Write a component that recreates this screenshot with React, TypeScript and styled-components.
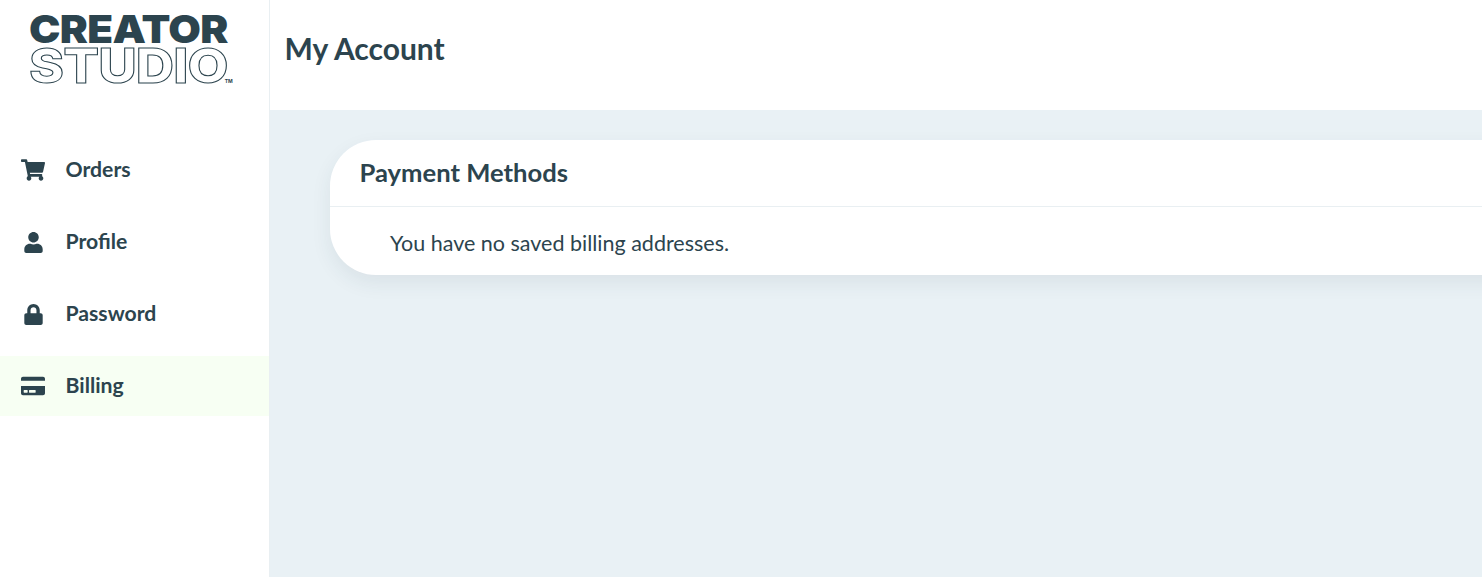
import styled, { createGlobalStyle } from 'styled-components';
import { FaShoppingCart, FaUser, FaLock, FaCreditCard } from 'react-icons/fa';
import type { IconType } from 'react-icons';

const GlobalStyle = createGlobalStyle`
  html, body {
    margin: 0;
    padding: 0;
    height: 100%;
    overflow: hidden;
    background: #fff;
  }
  body {
    font-family: 'Lato', 'Liberation Sans', sans-serif;
    color: #2c444e;
  }
  * {
    box-sizing: border-box;
  }
`;

const Shell = styled.div`
  display: flex;
  width: 100vw;
  height: 100vh;
  overflow: hidden;
`;

const Sidebar = styled.aside`
  flex: 0 0 270px;
  border-right: 1px solid #e9eff2;
  background: #fff;
`;

const LogoBox = styled.div`
  height: 140px;
  padding: 13px 0 0 29px;
`;

const LogoTop = styled.div`
  font-family: 'Inter', sans-serif;
  font-weight: 900;
  font-size: 39px;
  line-height: 32px;
  letter-spacing: -0.6px;
  color: #2c444e;
  transform: scaleX(1.08);
  transform-origin: left center;
`;

const LogoBottomRow = styled.div`
  display: flex;
  align-items: flex-end;
  margin-top: 3px;
`;

const LogoBottom = styled.div`
  font-family: 'Inter', sans-serif;
  font-weight: 800;
  font-size: 48px;
  line-height: 36px;
  letter-spacing: -0.8px;
  color: #fff;
  -webkit-text-stroke: 1px #2c444e;
  transform: scaleX(1.105);
  transform-origin: left center;
`;

const LogoTm = styled.span`
  margin: 0 0 0 16px;
  font-family: 'Inter', sans-serif;
  font-weight: 700;
  font-size: 5px;
  line-height: 6px;
`;

const NavList = styled.nav`
  display: flex;
  flex-direction: column;
  gap: 12px;
`;

const NavItem = styled.a<{ $active?: boolean }>`
  display: flex;
  align-items: center;
  height: 60px;
  padding: 0 0 2px 21px;
  font-size: 21.2px;
  font-weight: 700;
  color: #2c444e;
  background: ${(props) => (props.$active ? '#f7fff3' : 'transparent')};
`;

const NavIcon = styled.span<{ $size: number }>`
  display: flex;
  justify-content: center;
  width: 24px;
  margin: 2px 20.5px 0 0;
  font-size: ${(props) => props.$size}px;
`;

const Main = styled.main`
  flex: 1;
  min-width: 0;
  display: flex;
  flex-direction: column;
  background: #e9f1f5;
`;

const TopBar = styled.header`
  display: flex;
  align-items: center;
  height: 110px;
  padding: 0 0 14px 14.5px;
  background: #fff;
`;

const PageTitle = styled.h1`
  margin: 0;
  font-size: 30px;
  font-weight: 700;
  color: #2c444e;
`;

const Content = styled.div`
  padding: 30px 0 0 60px;
`;

const Card = styled.section`
  width: 1400px;
  border-radius: 46px;
  background: #fff;
  box-shadow: 0 8px 20px rgba(44, 68, 78, 0.08);
`;

const CardHeader = styled.div`
  display: flex;
  align-items: center;
  height: 67px;
  padding: 0 30px 2px 29.5px;
  border-bottom: 1px solid #e9eff2;
`;

const CardTitle = styled.h2`
  margin: 0;
  font-size: 25.6px;
  font-weight: 700;
  color: #2c444e;
`;

const CardBody = styled.p`
  margin: 0;
  height: 68px;
  padding: 24px 60px 0;
  font-size: 21.5px;
  line-height: 25px;
  color: #2c444e;
`;

const items: { label: string; icon: IconType; size: number; active?: boolean }[] = [
  { label: 'Orders', icon: FaShoppingCart, size: 24 },
  { label: 'Profile', icon: FaUser, size: 21 },
  { label: 'Password', icon: FaLock, size: 21 },
  { label: 'Billing', icon: FaCreditCard, size: 24, active: true },
];

export default function App() {
  return (
    <Shell>
      <GlobalStyle />
      <Sidebar>
        <LogoBox>
          <LogoTop>CREATOR</LogoTop>
          <LogoBottomRow>
            <LogoBottom>STUDIO</LogoBottom>
            <LogoTm>TM</LogoTm>
          </LogoBottomRow>
        </LogoBox>
        <NavList>
          {items.map((item) => (
            <NavItem key={item.label} $active={item.active}>
              <NavIcon $size={item.size}>
                <item.icon />
              </NavIcon>
              {item.label}
            </NavItem>
          ))}
        </NavList>
      </Sidebar>
      <Main>
        <TopBar>
          <PageTitle>My Account</PageTitle>
        </TopBar>
        <Content>
          <Card>
            <CardHeader>
              <CardTitle>Payment Methods</CardTitle>
            </CardHeader>
            <CardBody>You have no saved billing addresses.</CardBody>
          </Card>
        </Content>
      </Main>
    </Shell>
  );
}
